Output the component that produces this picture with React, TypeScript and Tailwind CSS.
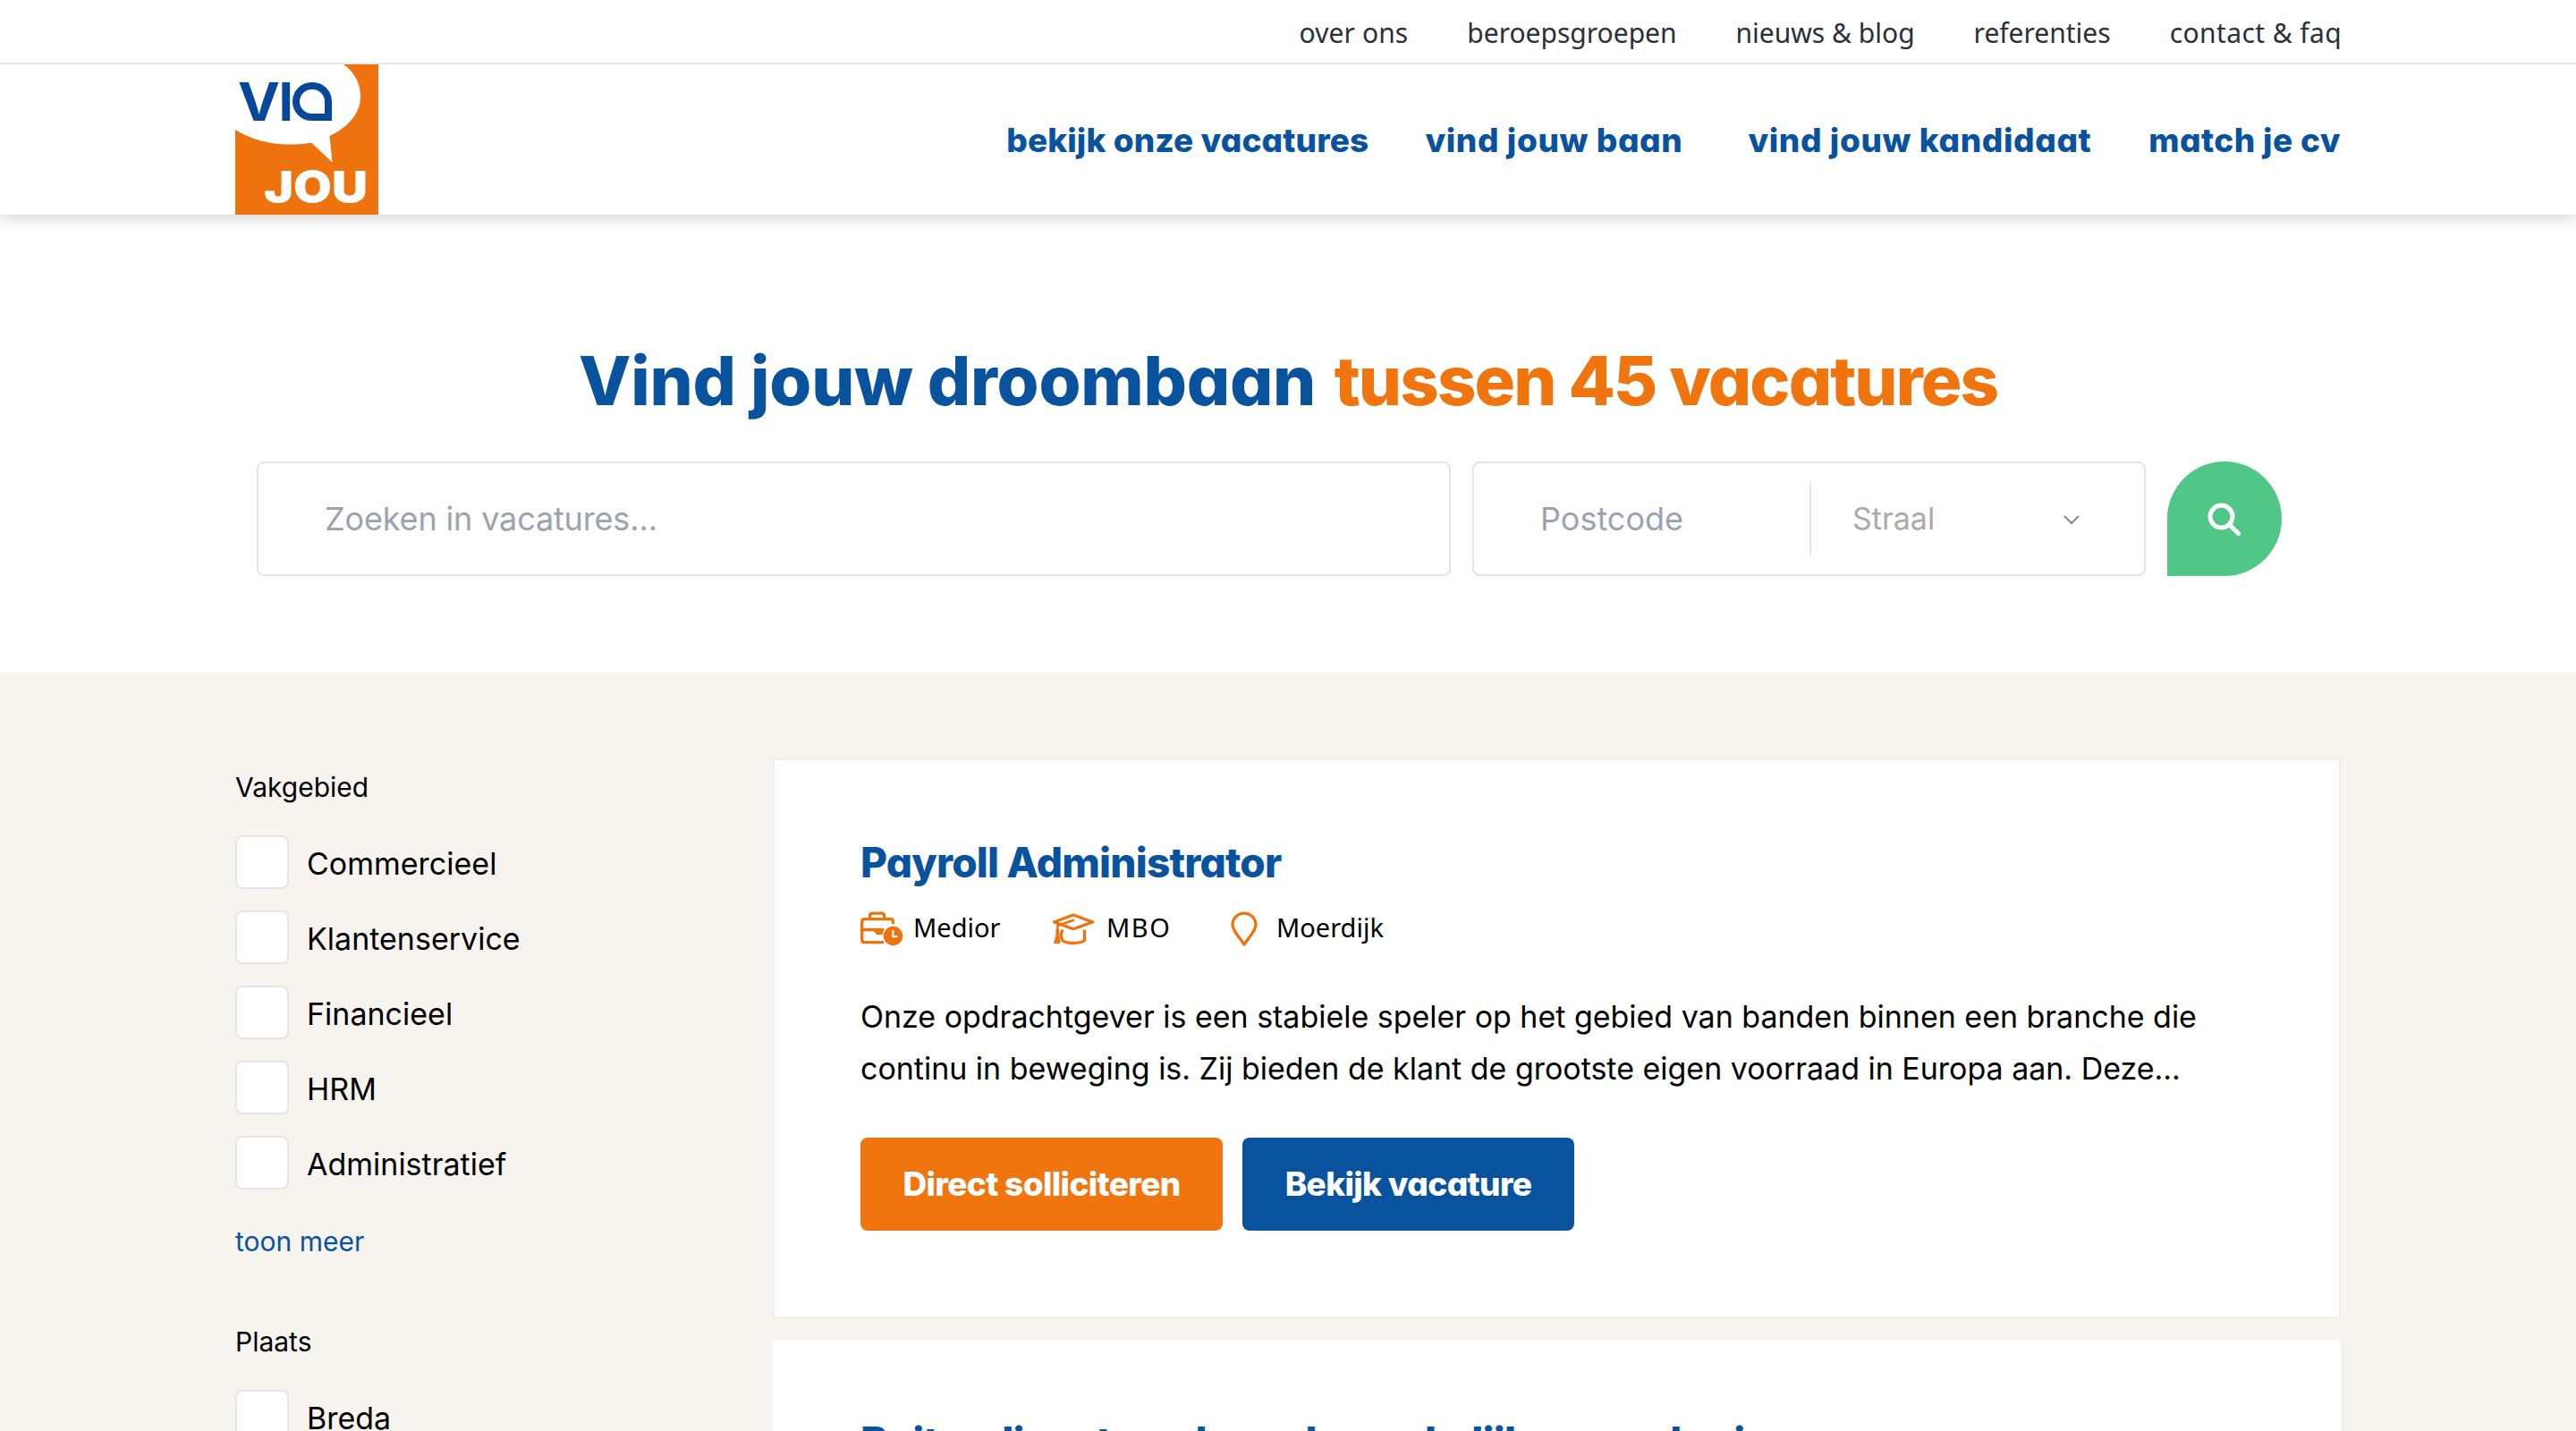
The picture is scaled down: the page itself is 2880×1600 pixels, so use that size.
import React from 'react';
import { clsx } from 'clsx';

const heading = "font-['Inter',sans-serif] font-extrabold [font-feature-settings:'cv11']";

const topLinks = [
  { label: 'over ons', className: 'tracking-[0.1px]' },
  { label: 'beroepsgroepen', className: '' },
  { label: 'nieuws & blog', className: '' },
  { label: 'referenties', className: '' },
  { label: 'contact & faq', className: 'tracking-[0.4px]' },
];

const mainLinks = [
  { label: 'bekijk onze vacatures', className: 'tracking-[0.1px] mr-[63px]' },
  { label: 'vind jouw baan', className: 'tracking-[0.6px] mr-[73px]' },
  { label: 'vind jouw kandidaat', className: 'tracking-[0.6px] mr-[64px]' },
  { label: 'match je cv', className: 'tracking-[0.4px]' },
];

const Logo: React.FC = () => (
  <a href="#" aria-label="VIA JOU" className="relative block w-[160px] h-[168px] bg-[#ee730f] overflow-hidden shrink-0">
    <svg viewBox="0 0 160 168" className="w-full h-full">
      <path
        d="M0 0H121C133 8 140 21 140 36C140 54 127 70 105.500 80L108.500 109.500L85 87.500C52 93 22 87 0 73Z"
        fill="#fff"
      />
      <text x="3" y="63" textLength="47" lengthAdjust="spacingAndGlyphs" fontFamily="Inter" fontWeight="700" fontSize="59" fill="#08489a">V</text>
      <text x="48.500" y="63" fontFamily="Inter" fontWeight="700" fontSize="59" fill="#08489a">I</text>
      <text x="32" y="153.500" textLength="116" lengthAdjust="spacingAndGlyphs" fontFamily="Inter" fontWeight="900" fontSize="48" fill="#fff">JOU</text>
    </svg>
    <span className="absolute left-[64px] top-[20px] w-[44px] h-[43px] border-[8.500px] border-[#08489a] rounded-full rounded-br-none" />
  </a>
);

const BriefcaseIcon: React.FC = () => (
  <svg viewBox="0 0 48 40" className="w-[48px] h-[40px] shrink-0" fill="none" stroke="#ee730f" strokeWidth="3.300">
    <path d="M10.500 8.500V5Q10.500 2.200 13.500 2.200H23.500Q26.500 2.200 26.500 5V8.500" />
    <path d="M36.500 14V11.500Q36.500 8.700 33.700 8.700H4.500Q1.700 8.700 1.700 11.500V32Q1.700 34.700 4.500 34.700H26M2 20.500H26" />
    <path d="M14 21H26L24.500 26H18Z" fill="#ee730f" stroke="none" />
    <circle cx="36.500" cy="27.500" r="10.700" fill="#ee730f" stroke="none" />
    <path d="M36.300 21V28.200H41.500" stroke="#fff" strokeWidth="2.200" />
  </svg>
);

const CapIcon: React.FC = () => (
  <svg viewBox="0 0 48 40" className="w-[48px] h-[40px] shrink-0" fill="none" stroke="#ee730f" strokeWidth="3.300" strokeLinejoin="round">
    <path d="M2.500 12L24 4L45.500 12L24 19.700Z" />
    <path d="M25 9.500L6.500 16V21" strokeWidth="2.500" />
    <path d="M4.500 20H8L9.300 36H2L4.500 27Z" fill="#ee730f" stroke="none" />
    <path d="M12 20.500C9.800 25 9.800 29 12 32.500C17 36.500 31 36.500 36.500 32.500V20.500" />
  </svg>
);

const PinIcon: React.FC = () => (
  <svg viewBox="0 0 30 40" className="w-[30px] h-[40px] shrink-0" fill="none" stroke="#ee730f" strokeWidth="3.300" strokeLinejoin="round">
    <path d="M15 37C10.500 30 2 22 2 15A13 12.800 0 0 1 28 15C28 22 19.500 30 15 37Z" />
  </svg>
);

interface FilterGroupProps {
  title: string;
  options: string[];
  className?: string;
}

const FilterGroup: React.FC<FilterGroupProps> = ({ title, options, className }) => (
  <div className={className}>
    <h3 className="text-[30px] leading-9 text-black">{title}</h3>
    <div className="mt-9 flex flex-col gap-6">
      {options.map((option) => (
        <label key={option} className="flex items-center h-[60px] gap-5">
          <span className="w-[60px] h-[60px] bg-white border-2 border-[#e5e5e5] rounded-lg shrink-0" />
          <span className="text-[34px] leading-10 text-black pt-[3px]">{option}</span>
        </label>
      ))}
    </div>
  </div>
);

export default function App() {
  return (
    <div className="w-[2880px] h-[1600px] overflow-hidden bg-white font-['Inter',sans-serif] flex flex-col">
      <header className="relative z-10 bg-white shrink-0 shadow-[0_4px_16px_rgba(0,0,0,0.17)]">
        <div className="h-[72px] border-b-2 border-[#e5e5e5]">
          <nav className="w-[2355px] ml-[263px] h-full pt-[2px] flex items-center justify-end gap-[66px] font-['Noto_Sans',sans-serif] text-[30px] text-[#2a2f38]">
            {topLinks.map((link) => (
              <a key={link.label} href="#" className={clsx('whitespace-nowrap', link.className)}>{link.label}</a>
            ))}
          </nav>
        </div>
        <div className="w-[2354px] ml-[263px] h-[168px] flex items-center justify-between">
          <Logo />
          <nav className={clsx(heading, 'flex text-[37px] text-[#09529e] pt-[2px]')}>
            {mainLinks.map((link) => (
              <a key={link.label} href="#" className={clsx('whitespace-nowrap', link.className)}>{link.label}</a>
            ))}
          </nav>
        </div>
      </header>

      <section className="h-[512px] shrink-0 pt-[139px]">
        <h1 className={clsx(heading, 'text-center text-[76px] leading-[92px] text-[#09529e] whitespace-nowrap')}>
          <span className="tracking-[-0.25px] mr-1">Vind jouw droombaan</span>{' '}
          <span className="tracking-[-1.9px] text-[#f0750f]">tussen 45 vacatures</span>
        </h1>
        <div className="mt-[45px] ml-[287px] flex gap-6 text-[36px]">
          <div className="w-[1335px] h-[128px] border-2 border-[#e5e5e5] rounded-lg flex items-center pl-[74px] text-[#9ca3af]">
            <span className="tracking-[-0.15px]">Zoeken in vacatures...</span>
          </div>
          <div className="w-[753px] h-[128px] border-2 border-[#e5e5e5] rounded-lg flex items-center pl-[74px] pr-[72px]">
            <span className="w-[301px] text-[#9ca3af]">Postcode</span>
            <span className="w-[2px] h-[84px] bg-[#e5e5e5]" />
            <span className="pl-[46px] pb-[2px] text-[34px] text-[#aaaaaa]">Straal</span>
            <svg viewBox="0 0 18 11" className="w-[18px] h-[11px] ml-auto mt-[2px]" fill="none" stroke="#888" strokeWidth="2">
              <path d="M1 1L9 9L17 1" />
            </svg>
          </div>
          <button className="w-[128px] h-[128px] bg-[#50c787] rounded-full rounded-bl-none flex items-center justify-center">
            <svg viewBox="0 0 38 38" className="w-[38px] h-[38px] mt-[2px]" fill="none" stroke="#fff" strokeWidth="5" strokeLinecap="round">
              <circle cx="15.500" cy="15.500" r="12.500" />
              <path d="M25 25L34.500 34.500" />
            </svg>
          </button>
        </div>
      </section>

      <main className="flex-1 min-h-0 bg-[#f7f4ef] pl-[263px] pt-[98px] flex overflow-hidden">
        <aside className="w-[601px] shrink-0 pt-3">
          <FilterGroup title="Vakgebied" options={['Commercieel', 'Klantenservice', 'Financieel', 'HRM', 'Administratief']} />
          <a href="#" className="block mt-10 text-[30px] leading-9 text-[#09529e]">toon meer</a>
          <FilterGroup className="mt-[76px]" title="Plaats" options={['Breda']} />
        </aside>

        <div className="w-[1753px] shrink-0 -mt-[2px] flex flex-col gap-6">
          <article className="h-[626px] shrink-0 bg-white border-2 border-[#f0efed] pl-[96px] pt-[86px]">
            <h2 className={clsx(heading, 'text-[46px] leading-[56px] tracking-[-0.8px] text-[#09529e]')}>Payroll Administrator</h2>
            <div className="mt-[27px] h-[40px] flex items-center font-['Noto_Sans',sans-serif] text-[29px] text-black">
              <BriefcaseIcon />
              <span className="w-[155px] ml-[11px] pb-[5px]">Medior</span>
              <CapIcon />
              <span className="w-[139px] ml-[13px] pb-[5px] tracking-[1.500px]">MBO</span>
              <PinIcon />
              <span className="ml-[21px] pb-[5px]">Moerdijk</span>
            </div>
            <p className="mt-[49px] text-[34px] leading-[58px] tracking-[-0.02px] text-black whitespace-nowrap">
              Onze opdrachtgever is een stabiele speler op het gebied van banden binnen een branche die<br />
              continu in beweging is. Zij bieden de klant de grootste eigen voorraad in Europa aan. Deze...
            </p>
            <div className={clsx(heading, 'mt-[48px] flex gap-[22px] text-[37px] tracking-[-0.65px] text-white')}>
              <button className="w-[405px] h-[104px] rounded-lg bg-[#f0750f]">Direct solliciteren</button>
              <button className="w-[371px] h-[104px] rounded-lg bg-[#09529e]">Bekijk vacature</button>
            </div>
          </article>
          <article className="h-[626px] shrink-0 bg-white pl-[98px] pt-[86px]">
            <h2 className={clsx(heading, 'text-[46px] leading-[56px] tracking-[-0.8px] text-[#09529e]')}>
              Buitendienst medewerker zakelijke verzekeringen
            </h2>
          </article>
        </div>
      </main>
    </div>
  );
}
